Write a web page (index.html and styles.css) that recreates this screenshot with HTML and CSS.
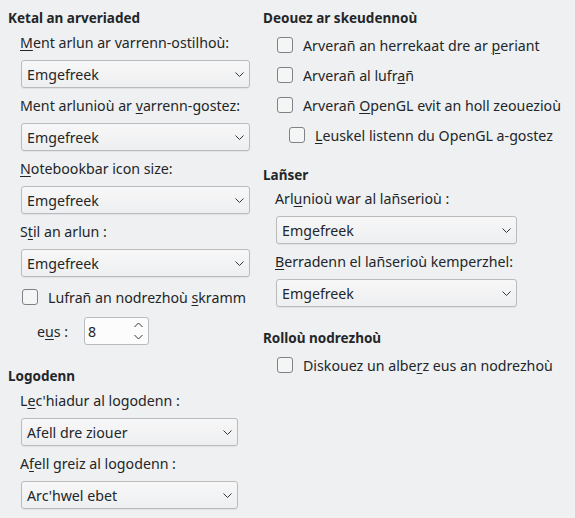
FILE: index.html
```html
<!DOCTYPE html>
<html lang="br">
<head>
<meta charset="utf-8">
<link rel="stylesheet" href="styles.css">
</head>
<body>
<div class="page">
  <div class="col col-left">
    <section class="frame">
      <div class="frame-title">Ketal an arveriaded</div>
      <div class="frame-body">
        <div class="field">
          <div class="label"><u>M</u>ent arlun ar varrenn-ostilhoù:</div>
          <div class="combo"><span>Emgefreek</span><svg class="chev" width="9" height="5" viewBox="0 0 9 5"><path d="M0.5 0.5 L4.5 4.5 L8.5 0.5" fill="none" stroke="#31363b" stroke-width="1"/></svg></div>
        </div>
        <div class="field">
          <div class="label">Ment arlunioù ar <u>v</u>arrenn-gostez:</div>
          <div class="combo"><span>Emgefreek</span><svg class="chev" width="9" height="5" viewBox="0 0 9 5"><path d="M0.5 0.5 L4.5 4.5 L8.5 0.5" fill="none" stroke="#31363b" stroke-width="1"/></svg></div>
        </div>
        <div class="field">
          <div class="label"><u>N</u>otebookbar icon size:</div>
          <div class="combo"><span>Emgefreek</span><svg class="chev" width="9" height="5" viewBox="0 0 9 5"><path d="M0.5 0.5 L4.5 4.5 L8.5 0.5" fill="none" stroke="#31363b" stroke-width="1"/></svg></div>
        </div>
        <div class="field">
          <div class="label">S<u>t</u>il an arlun :</div>
          <div class="combo"><span>Emgefreek</span><svg class="chev" width="9" height="5" viewBox="0 0 9 5"><path d="M0.5 0.5 L4.5 4.5 L8.5 0.5" fill="none" stroke="#31363b" stroke-width="1"/></svg></div>
        </div>
        <div class="check check-aa"><span class="box"></span><span>Lufrañ an nodrezhoù <u>s</u>kramm</span></div>
        <div class="spin-row">
          <span class="spin-label">e<u>u</u>s :</span>
          <div class="spin"><span>8</span><svg class="spin-arrows" width="9" height="18" viewBox="0 0 9 18"><path d="M0.5 5 L4.5 1 L8.5 5" fill="none" stroke="#31363b" stroke-width="1"/><path d="M0.5 13 L4.5 17 L8.5 13" fill="none" stroke="#31363b" stroke-width="1"/></svg></div>
        </div>
      </div>
    </section>
    <section class="frame frame-mouse">
      <div class="frame-title">Logodenn</div>
      <div class="frame-body">
        <div class="field">
          <div class="label">L<u>e</u>c'hiadur al logodenn :</div>
          <div class="combo combo-narrow"><span>Afell dre ziouer</span><svg class="chev" width="9" height="5" viewBox="0 0 9 5"><path d="M0.5 0.5 L4.5 4.5 L8.5 0.5" fill="none" stroke="#31363b" stroke-width="1"/></svg></div>
        </div>
        <div class="field">
          <div class="label">A<u>f</u>ell greiz al logodenn :</div>
          <div class="combo combo-narrow"><span>Arc'hwel ebet</span><svg class="chev" width="9" height="5" viewBox="0 0 9 5"><path d="M0.5 0.5 L4.5 4.5 L8.5 0.5" fill="none" stroke="#31363b" stroke-width="1"/></svg></div>
        </div>
      </div>
    </section>
  </div>
  <div class="col col-right">
    <section class="frame">
      <div class="frame-title">Deouez ar skeudennoù</div>
      <div class="frame-body checks">
        <div class="check"><span class="box"></span><span>Arverañ an herrekaat dre ar <u>p</u>eriant</span></div>
        <div class="check"><span class="box"></span><span>Arverañ al lufr<u>a</u>ñ</span></div>
        <div class="check"><span class="box"></span><span>Arverañ <u>O</u>penGL evit an holl zeouezioù</span></div>
        <div class="check check-sub"><span class="box"></span><span><u>L</u>euskel listenn du OpenGL a-gostez</span></div>
      </div>
    </section>
    <section class="frame frame-menu">
      <div class="frame-title">Lañser</div>
      <div class="frame-body">
        <div class="field">
          <div class="label">Arl<u>u</u>nioù war al lañserioù :</div>
          <div class="combo combo-wide"><span>Emgefreek</span><svg class="chev" width="9" height="5" viewBox="0 0 9 5"><path d="M0.5 0.5 L4.5 4.5 L8.5 0.5" fill="none" stroke="#31363b" stroke-width="1"/></svg></div>
        </div>
        <div class="field">
          <div class="label"><u>B</u>erradenn el lañserioù kemperzhel:</div>
          <div class="combo combo-wide"><span>Emgefreek</span><svg class="chev" width="9" height="5" viewBox="0 0 9 5"><path d="M0.5 0.5 L4.5 4.5 L8.5 0.5" fill="none" stroke="#31363b" stroke-width="1"/></svg></div>
        </div>
      </div>
    </section>
    <section class="frame frame-fonts">
      <div class="frame-title">Rolloù nodrezhoù</div>
      <div class="frame-body checks">
        <div class="check"><span class="box"></span><span>Diskouez un albe<u>r</u>z eus an nodrezhoù</span></div>
      </div>
    </section>
  </div>
</div>
</body>
</html>
```

FILE: styles.css
```css
html, body {
  margin: 0;
  padding: 0;
  background: #eff0f1;
}
body {
  font-family: "Noto Sans", "DejaVu Sans", sans-serif;
  font-size: 14.2px;
  color: #232629;
  width: 575px;
  height: 518px;
  overflow: hidden;
}
u {
  text-decoration: underline;
  text-underline-offset: 2px;
  text-decoration-thickness: 1px;
}
.page {
  display: flex;
  padding: 8px 0 0 8px;
  gap: 14px;
}
.col-left { width: 241px; }
.col-right { width: 300px; }
.frame-title {
  font-weight: bold;
  font-size: 13.5px;
  height: 20px;
  line-height: 20px;
}
.frame-body {
  padding-left: 12px;
  display: flex;
  flex-direction: column;
}
.label {
  height: 22px;
  line-height: 22px;
  margin-top: 4px;
  white-space: nowrap;
}
.field + .field .label { margin-top: 7px; }
.combo {
  margin-top: 6px;
  box-sizing: border-box;
  height: 28px;
  width: 229px;
  margin-left: 1px;
  border: 1px solid #b9bbbd;
  border-radius: 3px;
  background: linear-gradient(#f7f7f8, #eeeff0);
  box-shadow: 0 1px 1px rgba(0,0,0,0.06);
  display: flex;
  align-items: center;
  justify-content: space-between;
  padding: 0 5px 0 5px;
  white-space: nowrap;
}
.combo-narrow { width: 217px; }
.combo-wide { width: 241px; }
.chev { display: block; }
.check {
  display: flex;
  align-items: center;
  gap: 10px;
  height: 30px;
  white-space: nowrap;
}
.check-aa {
  margin-top: 8px;
  height: 24px;
}
.box {
  margin-left: 2px;
  width: 16px;
  height: 16px;
  box-sizing: border-box;
  border: 1px solid #7f8285;
  border-radius: 3px;
  background: #f4f5f5;
  flex: none;
}
.check-sub { padding-left: 12px; }
.checks { padding-top: 2px; }
.spin-row {
  margin-top: 8px;
  display: flex;
  align-items: center;
  padding-left: 17px;
  height: 28px;
}
.spin-label { width: 47px; }
.spin {
  box-sizing: border-box;
  width: 65px;
  height: 28px;
  background: #fcfcfc;
  border: 1px solid #b9bbbd;
  border-radius: 3px;
  display: flex;
  align-items: center;
  justify-content: space-between;
  padding: 0 5px 0 3px;
}
.spin-arrows { display: block; }
.frame-mouse { margin-top: 21px; }
.frame-menu { margin-top: 15px; }
.frame-menu .field:first-child .label { margin-top: 3px; }
.frame-fonts { margin-top: 21px; }
```
